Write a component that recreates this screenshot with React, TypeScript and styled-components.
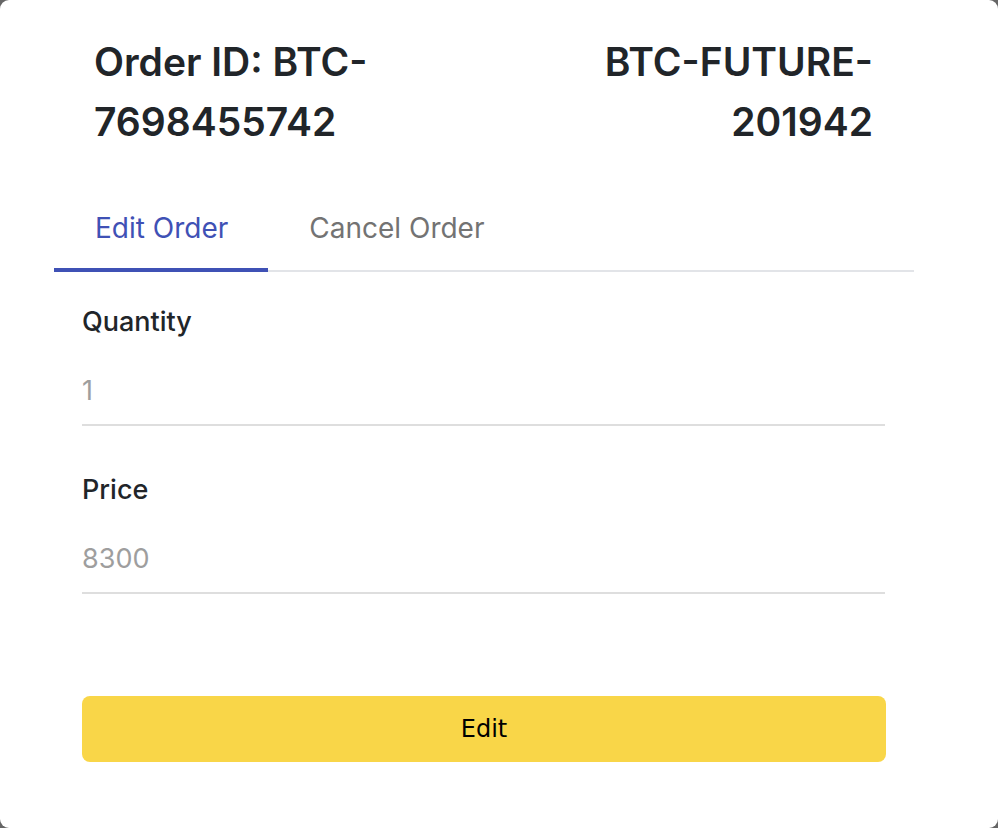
import React, { useState } from "react";
import styled, { createGlobalStyle } from "styled-components";

const GlobalStyle = createGlobalStyle`
  html, body {
    margin: 0;
    padding: 0;
    background: #666666;
  }
  * {
    box-sizing: border-box;
  }
`;

const TABS = ["Edit Order", "Cancel Order"];

const Modal = styled.div`
  min-height: 828px;
  background: #ffffff;
  border-radius: 9px;
  overflow: hidden;
  font-family: "Inter", "Liberation Sans", sans-serif;
  color: #212529;
`;

const Header = styled.div`
  display: grid;
  grid-template-columns: 1fr 1fr;
  column-gap: 40px;
  padding: 32px 125px 0 94px;
`;

const Title = styled.h4<{ $right?: boolean }>`
  margin: 0;
  font-size: 39px;
  font-weight: 600;
  line-height: 60px;
  text-align: ${(p) => (p.$right ? "right" : "left")};
`;

const TabBar = styled.div`
  display: flex;
  margin: 28px 84px 0 54px;
  border-bottom: 2px solid #e2e4e8;
`;

const Tab = styled.button<{ $active?: boolean }>`
  height: 90px;
  padding: 6px 40px 0 41px;
  border: none;
  background: none;
  font-family: "Inter", "Liberation Sans", sans-serif;
  font-size: 28px;
  font-weight: 400;
  color: ${(p) => (p.$active ? "#3f51b5" : "#737373")};
  box-shadow: ${(p) =>
    p.$active ? "inset 0 -2px 0 #3f51b5, 0 2px 0 #3f51b5" : "none"};
  cursor: pointer;
`;

const Form = styled.div`
  display: flex;
  flex-direction: column;
  padding: 32px 113px 0 82px;
`;

const Field = styled.div`
  display: flex;
  flex-direction: column;
  gap: 33px;
  & + & {
    margin-top: 46px;
  }
`;

const Label = styled.label`
  font-size: 27px;
  font-weight: 500;
  line-height: 36px;
  color: #212529;
`;

const Value = styled.div`
  font-size: 27px;
  line-height: 36px;
  color: #9e9e9e;
  padding-bottom: 15px;
  border-bottom: 2px solid #dedede;
`;

const EditButton = styled.button`
  margin-top: 102px;
  height: 66px;
  width: 804px;
  border: none;
  border-radius: 8px;
  background: #f9d648;
  font-family: "DejaVu Sans", sans-serif;
  font-size: 24px;
  color: #000000;
  cursor: pointer;
`;

export default function App() {
  const [active, setActive] = useState(0);

  return (
    <>
      <GlobalStyle />
      <Modal>
        <Header>
          <Title>Order ID: BTC-7698455742</Title>
          <Title $right>BTC-FUTURE-201942</Title>
        </Header>
        <TabBar>
          {TABS.map((t, i) => (
            <Tab key={t} $active={i === active} onClick={() => setActive(i)}>
              {t}
            </Tab>
          ))}
        </TabBar>
        <Form>
          <Field>
            <Label>Quantity</Label>
            <Value>1</Value>
          </Field>
          <Field>
            <Label>Price</Label>
            <Value>8300</Value>
          </Field>
          <EditButton>Edit</EditButton>
        </Form>
      </Modal>
    </>
  );
}
